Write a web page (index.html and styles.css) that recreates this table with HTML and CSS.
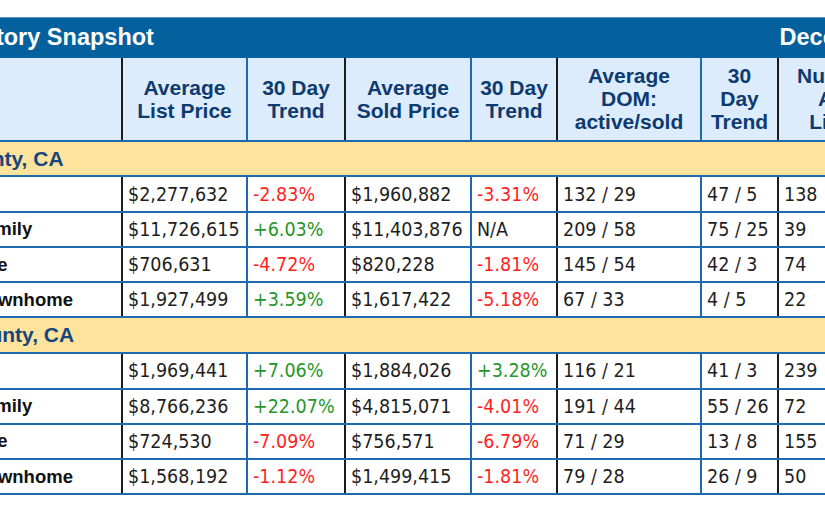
FILE: index.html
```html
<!DOCTYPE html>
<html lang="en">
<head>
<meta charset="utf-8">
<title>Inventory Snapshot</title>
<link rel="stylesheet" href="styles.css">
</head>
<body>
<div class="viewport">
  <div class="report">
    <div class="titlebar">
      <span class="title">Bay Area Inventory Snapshot</span>
      <span class="date">December 2023</span>
    </div>
    <table class="grid">
      <colgroup>
        <col class="c-label"><col class="c-list"><col class="c-trend"><col class="c-sold"><col class="c-trend2"><col class="c-dom"><col class="c-domtrend"><col class="c-num"><col class="c-numtrend">
      </colgroup>
      <thead>
        <tr>
          <th></th>
          <th>Average<br>List Price</th>
          <th>30 Day<br>Trend</th>
          <th>Average<br>Sold Price</th>
          <th>30 Day<br>Trend</th>
          <th>Average<br>DOM:<br>active/sold</th>
          <th>30<br>Day<br>Trend</th>
          <th>Number of<br>Active<br>Listings</th>
          <th>30 Day<br>Trend</th>
        </tr>
      </thead>
      <tbody>
        <tr class="section"><td colspan="9">San Mateo County, CA</td></tr>
        <tr class="data"><td class="label">All</td><td>$2,277,632</td><td class="down">-2.83%</td><td>$1,960,882</td><td class="down">-3.31%</td><td>132 / 29</td><td>47 / 5</td><td>138</td><td class="down">-4.17%</td></tr>
        <tr class="data"><td class="label">Single Family</td><td>$11,726,615</td><td class="up">+6.03%</td><td>$11,403,876</td><td>N/A</td><td>209 / 58</td><td>75 / 25</td><td>39</td><td class="up">+2.63%</td></tr>
        <tr class="data"><td class="label">New Home</td><td>$706,631</td><td class="down">-4.72%</td><td>$820,228</td><td class="down">-1.81%</td><td>145 / 54</td><td>42 / 3</td><td>74</td><td class="down">-5.13%</td></tr>
        <tr class="data"><td class="label">Condo/Townhome</td><td>$1,927,499</td><td class="up">+3.59%</td><td>$1,617,422</td><td class="down">-5.18%</td><td>67 / 33</td><td>4 / 5</td><td>22</td><td class="up">+4.76%</td></tr>
        <tr class="section"><td colspan="9">Santa Clara County, CA</td></tr>
        <tr class="data"><td class="label">All</td><td>$1,969,441</td><td class="up">+7.06%</td><td>$1,884,026</td><td class="up">+3.28%</td><td>116 / 21</td><td>41 / 3</td><td>239</td><td class="down">-2.84%</td></tr>
        <tr class="data"><td class="label">Single Family</td><td>$8,766,236</td><td class="up">+22.07%</td><td>$4,815,071</td><td class="down">-4.01%</td><td>191 / 44</td><td>55 / 26</td><td>72</td><td class="up">+1.41%</td></tr>
        <tr class="data"><td class="label">New Home</td><td>$724,530</td><td class="down">-7.09%</td><td>$756,571</td><td class="down">-6.79%</td><td>71 / 29</td><td>13 / 8</td><td>155</td><td class="down">-3.13%</td></tr>
        <tr class="data"><td class="label">Condo/Townhome</td><td>$1,568,192</td><td class="down">-1.12%</td><td>$1,499,415</td><td class="down">-1.81%</td><td>79 / 28</td><td>26 / 9</td><td>50</td><td class="up">+6.38%</td></tr>
      </tbody>
    </table>
  </div>
</div>
</body>
</html>
```
FILE: styles.css
```css
html, body {
  margin: 0;
  padding: 0;
  background: #ffffff;
}

.viewport {
  width: 825px;
  height: 510px;
  overflow: hidden;
  padding-top: 17px;
  box-sizing: border-box;
}

.report {
  width: 1176px;
  margin-left: -179px;
}

.titlebar {
  height: 40.5px;
  box-sizing: border-box;
  border-top: 1px solid #5c9acd;
  background: #05609e;
  color: #ffffff;
  display: flex;
  align-items: center;
  justify-content: space-between;
  padding: 0 45px 0 6px;
  font-family: "Liberation Sans", Arial, sans-serif;
  font-weight: bold;
  font-size: 23.5px;
  white-space: nowrap;
}

.grid {
  width: 1176px;
  table-layout: fixed;
  border-collapse: collapse;
  border-spacing: 0;
}

.c-label { width: 300px; }
.c-list { width: 125px; }
.c-trend { width: 98px; }
.c-sold { width: 126px; }
.c-trend2 { width: 86px; }
.c-dom { width: 144px; }
.c-domtrend { width: 77px; }
.c-num { width: 143px; }
.c-numtrend { width: 77px; }

.grid th,
.grid td {
  border: 2px solid #1f6aae;
  padding: 0;
  overflow: hidden;
  white-space: nowrap;
}

.grid th:nth-child(1),
.grid th:nth-child(3),
.grid th:nth-child(5),
.grid th:nth-child(7),
.grid td:nth-child(1),
.grid td:nth-child(3),
.grid td:nth-child(5),
.grid td:nth-child(7) {
  border-right-color: #1c1c1c;
}

.grid thead tr {
  height: 83.2px;
}

.grid th {
  border-top: 0;
  background: #ddecfc;
  color: #0e3b6f;
  font-family: "Liberation Sans", Arial, sans-serif;
  font-weight: bold;
  font-size: 21px;
  line-height: 23px;
  text-align: center;
  vertical-align: middle;
  padding: 0 3px;
}

.section {
  height: 35.8px;
}

.section td {
  background: #fee39c;
  color: #17467c;
  font-family: "Liberation Sans", Arial, sans-serif;
  font-weight: bold;
  font-size: 21px;
  padding-left: 17px;
  vertical-align: middle;
}

.data {
  height: 35.25px;
}

.data td {
  background: #ffffff;
  color: #1e1e1e;
  font-family: "DejaVu Sans Condensed", "DejaVu Sans", sans-serif;
  font-stretch: semi-condensed;
  font-size: 19.5px;
  padding-left: 5px;
  vertical-align: middle;
}

.data td.label {
  font-family: "Liberation Sans", Arial, sans-serif;
  font-stretch: normal;
  font-weight: bold;
  font-size: 18.5px;
  color: #111111;
  padding-left: 90px;
}

.data td.down {
  color: #ff1f1f;
}

.data td.up {
  color: #27962a;
}
```
